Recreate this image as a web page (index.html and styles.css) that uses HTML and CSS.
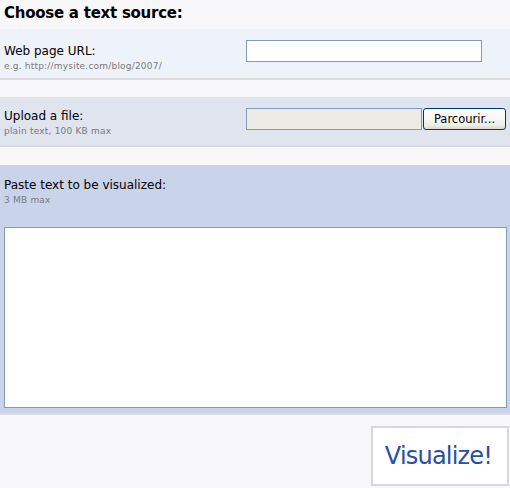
FILE: index.html
```html
<!DOCTYPE html>
<html>
<head>
<meta charset="utf-8">
<link rel="stylesheet" href="styles.css">
</head>
<body>
<h1 class="title">Choose a text source:</h1>
<div class="section s-url">
  <div class="label">
    <div class="main">Web page URL:</div>
    <div class="hint">e.g. http://mysite.com/blog/2007/</div>
  </div>
  <div class="field"><input class="url" type="text"></div>
</div>
<div class="section s-file">
  <div class="label">
    <div class="main">Upload a file:</div>
    <div class="hint">plain text, 100 KB max</div>
  </div>
  <div class="field file-field"><span class="file-box"></span><button class="browse">Parcourir...</button></div>
</div>
<div class="section s-text">
  <div class="label">
    <div class="main">Paste text to be visualized:</div>
    <div class="hint">3 MB max</div>
  </div>
  <textarea class="paste"></textarea>
</div>
<div class="footer">
  <button class="go">Visualize!</button>
</div>
</body>
</html>
```
FILE: styles.css
```css
html, body {
  margin: 0;
  padding: 0;
  background: #f8f8fa;
  width: 510px;
  height: 488px;
  overflow: hidden;
  font-family: "DejaVu Sans", Verdana, sans-serif;
  color: #000;
}
.title {
  margin: 0;
  height: 29px;
  box-sizing: border-box;
  padding: 4px 0 0 4px;
  font-size: 15px;
  font-weight: bold;
  line-height: 18px;
  letter-spacing: -0.25px;
}
.section {
  box-sizing: border-box;
  border-bottom: 2px solid #dcdcde;
  padding: 0 4px;
}
.s-url {
  background: #eef2f9;
  height: 51px;
  display: grid;
  grid-template-columns: 242px 1fr;
  padding-top: 11px;
  margin-bottom: 17px;
}
.s-url .label {
  padding-top: 4px;
}
.s-file {
  background: #dfe4ef;
  height: 50px;
  display: grid;
  grid-template-columns: 242px 1fr;
  padding-top: 11px;
  margin-bottom: 18px;
}
.s-file .label {
  padding-top: 1px;
}
.s-text {
  background: #c9d3e9;
  height: 250px;
  padding-top: 13px;
}
.main {
  font-size: 12px;
  line-height: 15px;
}
.hint {
  margin-top: 1px;
  font-size: 9px;
  line-height: 13px;
  color: #7a7a7a;
  letter-spacing: 0.2px;
}
.url {
  display: block;
  margin: 0;
  width: 236px;
  height: 22px;
  box-sizing: border-box;
  border: 1px solid #7f9db9;
  background: #fff;
  padding: 0;
}
.file-field {
  display: flex;
  align-items: flex-start;
}
.file-box {
  display: block;
  width: 176px;
  height: 22px;
  box-sizing: border-box;
  border: 1px solid #7f9db9;
  background: #ecebe5;
}
.browse {
  margin: 0 0 0 1px;
  width: 83px;
  height: 22px;
  box-sizing: border-box;
  border: 1px solid #003c74;
  border-radius: 3px;
  background: linear-gradient(#ffffff, #f0f0ea 80%, #d8d6cc);
  font-family: "DejaVu Sans", Verdana, sans-serif;
  font-size: 11.5px;
  color: #000;
  padding: 0;
}
.paste {
  display: block;
  margin: 20px 0 0 0;
  width: 503px;
  height: 181px;
  box-sizing: border-box;
  border: 1px solid #7f9db9;
  background: #fff;
  resize: none;
  padding: 0;
}
.footer {
  display: flex;
  justify-content: flex-end;
  padding: 11px 1px 0 0;
}
.go {
  width: 138px;
  height: 60px;
  box-sizing: border-box;
  border: 2px solid #d8d8da;
  background: #fff;
  color: #2a4ea6;
  font-family: "DejaVu Sans", Verdana, sans-serif;
  font-size: 24px;
  letter-spacing: -0.8px;
  padding: 0 3px 0 0;
  margin: 0;
}
```
